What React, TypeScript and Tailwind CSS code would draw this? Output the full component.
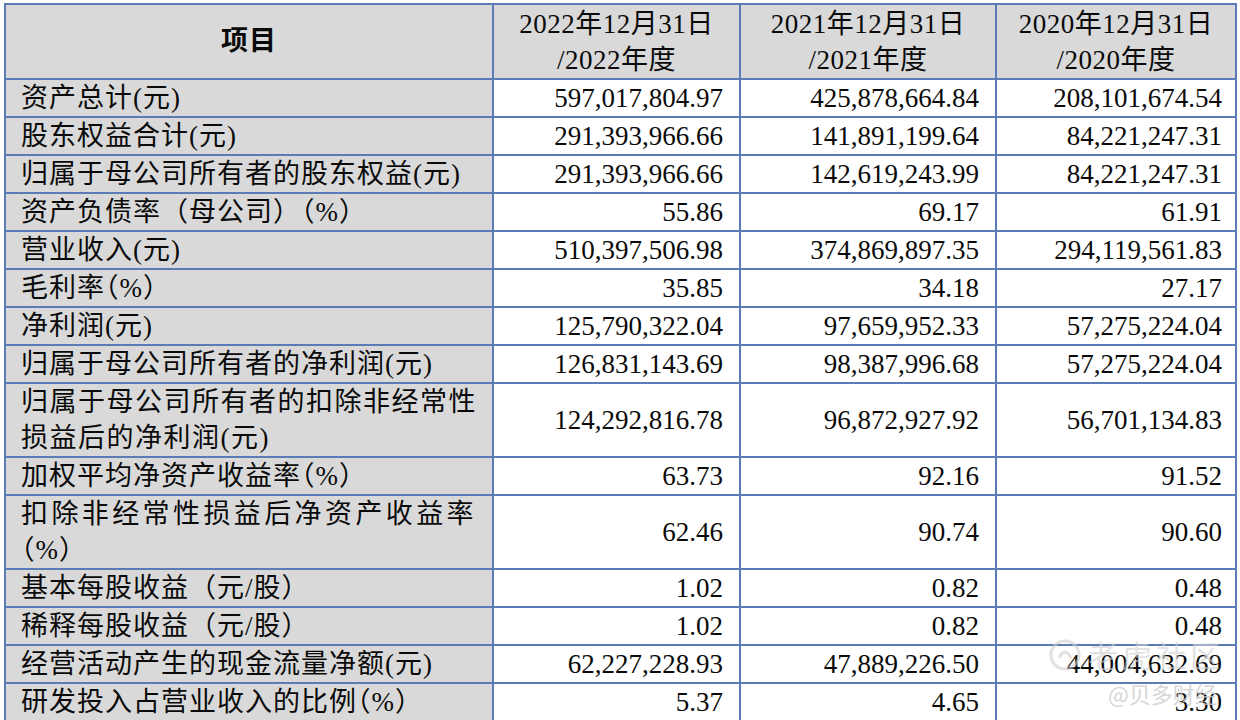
import React from "react";

type Row = { label: React.ReactNode; v: [string, string, string]; h: number };

const Full = ({ children }: { children: React.ReactNode }) => (
  <span className="[font-feature-settings:normal]">{children}</span>
);

const rows: Row[] = [
  { label: "资产总计(元)", v: ["597,017,804.97", "425,878,664.84", "208,101,674.54"], h: 37 },
  { label: "股东权益合计(元)", v: ["291,393,966.66", "141,891,199.64", "84,221,247.31"], h: 38 },
  { label: "归属于母公司所有者的股东权益(元)", v: ["291,393,966.66", "142,619,243.99", "84,221,247.31"], h: 38 },
  {
    label: (
      <>
        资产负债率<Full>（母公司）</Full>（%）
      </>
    ),
    v: ["55.86", "69.17", "61.91"],
    h: 37,
  },
  { label: "营业收入(元)", v: ["510,397,506.98", "374,869,897.35", "294,119,561.83"], h: 38 },
  { label: "毛利率（%）", v: ["35.85", "34.18", "27.17"], h: 37 },
  { label: "净利润(元)", v: ["125,790,322.04", "97,659,952.33", "57,275,224.04"], h: 38 },
  { label: "归属于母公司所有者的净利润(元)", v: ["126,831,143.69", "98,387,996.68", "57,275,224.04"], h: 38 },
  {
    label: (
      <span className="tracking-[1.5px]">
        归属于母公司所有者的扣除非经常性
        <br />
        损益后的净利润(元)
      </span>
    ),
    v: ["124,292,816.78", "96,872,927.92", "56,701,134.83"],
    h: 74,
  },
  { label: "加权平均净资产收益率（%）", v: ["63.73", "92.16", "91.52"], h: 37 },
  {
    label: (
      <>
        <span className="tracking-[3.4px]">扣除非经常性损益后净资产收益率</span>
        <br />
        （%）
      </>
    ),
    v: ["62.46", "90.74", "90.60"],
    h: 74,
  },
  {
    label: (
      <>
        基本每股收益<Full>（元/股）</Full>
      </>
    ),
    v: ["1.02", "0.82", "0.48"],
    h: 38,
  },
  {
    label: (
      <>
        稀释每股收益<Full>（元/股）</Full>
      </>
    ),
    v: ["1.02", "0.82", "0.48"],
    h: 38,
  },
  { label: "经营活动产生的现金流量净额(元)", v: ["62,227,228.93", "47,889,226.50", "44,004,632.69"], h: 37 },
  { label: "研发投入占营业收入的比例（%）", v: ["5.37", "4.65", "3.30"], h: 38 },
];

const headers = [
  ["2022年12月31日", "/2022年度"],
  ["2021年12月31日", "/2021年度"],
  ["2020年12月31日", "/2020年度"],
];

export default function App() {
  return (
    <div
      className="relative w-[1240px] h-[720px] bg-white overflow-hidden text-[#0a0a0a]"
      style={{ fontFamily: '"Liberation Serif", "Noto Sans CJK SC", serif' }}
    >
      <div className="pl-[4px] pt-[3px]">
        <table className="table-fixed border-collapse w-[1231px] [font-feature-settings:'halt']">
          <colgroup>
            <col className="w-[488px]" />
            <col className="w-[247px]" />
            <col className="w-[256px]" />
            <col className="w-[240px]" />
          </colgroup>
          <thead>
            <tr className="h-[75px]">
              <th className="border-2 border-[#5b7bb5] bg-[#d9d9d9] text-center text-[27px] font-bold tracking-[1px]">
                项目
              </th>
              {headers.map((h, i) => (
                <th
                  key={i}
                  className="border-2 border-[#5b7bb5] bg-[#d9d9d9] text-center text-[27px] font-normal leading-[36px] tracking-[0.5px]"
                >
                  <div>{h[0]}</div>
                  <div>{h[1]}</div>
                </th>
              ))}
            </tr>
          </thead>
          <tbody>
            {rows.map((r, i) => (
              <tr key={i} style={{ height: r.h }}>
                <td className="border-2 border-[#5b7bb5] bg-[#d9d9d9] pl-[15px] pr-[4px] text-left text-[27px] leading-[36px] tracking-[1px] whitespace-nowrap">
                  {r.label}
                </td>
                {r.v.map((v, j) => (
                  <td
                    key={j}
                    className={`border-2 border-[#5b7bb5] bg-white text-right text-[27px] leading-[36px] ${
                      j === 2 ? "pr-[13px]" : "pr-[16px]"
                    }`}
                  >
                    {v}
                  </td>
                ))}
              </tr>
            ))}
          </tbody>
        </table>
      </div>

      {/* watermarks */}
      <div className="absolute left-[1048px] top-[632px] flex items-center gap-[6px] opacity-60 pointer-events-none">
        <svg width="34" height="34" viewBox="0 0 34 34">
          <circle cx="17" cy="17" r="14" fill="none" stroke="#cfcfcf" strokeWidth="3" />
          <path d="M11 20 q6 -12 12 0" fill="none" stroke="#cfcfcf" strokeWidth="3" />
        </svg>
        <span
          className="text-[30px] text-[#d0d0d0] tracking-[4px]"
          style={{ fontFamily: '"Noto Sans CJK SC", sans-serif' }}
        >
          老虎社区
        </span>
      </div>
      <div
        className="absolute left-[1108px] top-[677px] text-[22px] text-[#cdcdcd] opacity-80 pointer-events-none"
        style={{ fontFamily: '"Noto Sans CJK SC", sans-serif' }}
      >
        @贝多财经
      </div>
    </div>
  );
}
